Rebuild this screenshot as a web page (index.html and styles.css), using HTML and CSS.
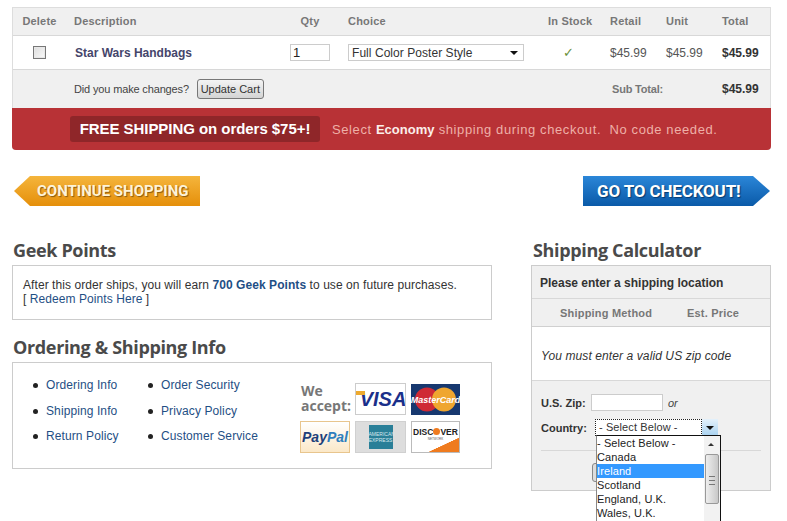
FILE: index.html
```html
<!DOCTYPE html>
<html lang="en">
<head>
  <meta charset="UTF-8">
  <title>Shopping Cart</title>
  <link rel="stylesheet" href="styles.css">
</head>
<body>
  <div class="page">
    <div class="cart">
      <div class="cart-row cart-head">
        <div class="col-delete">Delete</div>
        <div>Description</div>
        <div class="col-qty">Qty</div>
        <div>Choice</div>
        <div>In Stock</div>
        <div>Retail</div>
        <div>Unit</div>
        <div>Total</div>
      </div>
      <div class="cart-row cart-item">
        <div class="col-delete"><span class="checkbox"></span></div>
        <div class="item-name">Star Wars Handbags</div>
        <div class="col-qty"><span class="qty-input">1</span></div>
        <div><span class="choice-select">Full Color Poster Style<span class="select-arrow"></span></span></div>
        <div class="stock-check">✓</div>
        <div>$45.99</div>
        <div>$45.99</div>
        <div class="price-total">$45.99</div>
      </div>
      <div class="cart-row cart-foot">
        <div></div>
        <div class="changes">Did you make changes? <button class="update-btn">Update Cart</button></div>
        <div class="subtotal-label">Sub Total:</div>
        <div class="price-total">$45.99</div>
      </div>
      <div class="promo">
        <span class="promo-badge">FREE SHIPPING on orders $75+!</span>
        <span class="promo-text">Select <b>Economy</b> shipping during checkout.&nbsp; No code needed.</span>
      </div>
    </div>

    <div class="actions">
      <a class="arrow-btn continue">CONTINUE SHOPPING</a>
      <a class="arrow-btn checkout">GO TO CHECKOUT!</a>
    </div>

    <div class="lower">
      <div class="left-col">
        <h2>Geek Points</h2>
        <div class="panel points">
          After this order ships, you will earn <b>700 Geek Points</b> to use on future purchases.<br>
          [ <a>Redeem Points Here</a> ]
        </div>
        <h2 class="second">Ordering &amp; Shipping Info</h2>
        <div class="panel info">
          <ul class="links">
            <li><a>Ordering Info</a></li>
            <li><a>Shipping Info</a></li>
            <li><a>Return Policy</a></li>
          </ul>
          <ul class="links links-two">
            <li><a>Order Security</a></li>
            <li><a>Privacy Policy</a></li>
            <li><a>Customer Service</a></li>
          </ul>
          <div class="cards">
            <div class="we-accept">We accept:</div>
            <div class="card visa"><span class="visa-flag"></span>VISA</div>
            <div class="card mastercard">
              <svg width="49" height="31" viewBox="0 0 49 31">
                <rect width="49" height="31" fill="#17386f"/>
                <circle cx="16" cy="15.500" r="12" fill="#cf2a35"/>
                <circle cx="33" cy="15.500" r="12" fill="#efa62f"/>
                <text x="24.500" y="19" text-anchor="middle" class="mc-text">MasterCard</text>
              </svg>
            </div>
            <div class="card paypal"><b>Pay</b><b class="pal">Pal</b></div>
            <div class="card amex"><span class="amex-box">AMERICAN EXPRESS</span></div>
            <div class="card discover">
              <span class="disc-name">DISC<i></i>VER</span>
              <span class="disc-sub">NETWORK</span>
            </div>
          </div>
        </div>
      </div>

      <div class="right-col">
        <h2>Shipping Calculator</h2>
        <div class="calc">
          <div class="calc-title">Please enter a shipping location</div>
          <div class="calc-cols"><span>Shipping Method</span><span>Est. Price</span></div>
          <div class="calc-msg">You must enter a valid US zip code</div>
          <div class="calc-form">
            <div class="zip-row"><b>U.S. Zip:</b><span class="zip-input"></span><i>or</i></div>
            <div class="country-row"><b>Country:</b>
              <span class="country-select"><span class="country-value">- Select Below -</span><span class="country-btn"></span></span>
            </div>
            <div class="calc-submit"><button class="calc-btn" aria-label="Calculate"></button></div>
          </div>
          <div class="dropdown">
            <ul class="dropdown-list">
              <li>- Select Below -</li>
              <li>Canada</li>
              <li class="selected">Ireland</li>
              <li>Scotland</li>
              <li>England, U.K.</li>
              <li>Wales, U.K.</li>
            </ul>
            <div class="scrollbar">
              <span class="scroll-up"></span>
              <span class="scroll-thumb"></span>
            </div>
          </div>
        </div>
      </div>
    </div>
  </div>
</body>
</html>
```

FILE: styles.css
```css
* {
  margin: 0;
  padding: 0;
  box-sizing: border-box;
}
html, body {
  height: 521px;
  overflow: hidden;
}
body {
  background: #fff;
  color: #333;
  font-family: "Liberation Sans", Arial, sans-serif;
  font-size: 12px;
}
a {
  color: #1f4f85;
}
.page {
  width: 759px;
  margin: 7px 0 0 12px;
}

/* cart table */
.cart {
  border: 1px solid #ddd;
  border-bottom: none;
  border-radius: 0 0 4px 4px;
}
.cart-row {
  display: grid;
  grid-template-columns: 61px 216px 58px 200px 62px 56px 56px 48px;
  align-items: center;
}
.cart-head {
  height: 28px;
  padding-bottom: 2px;
  background: #f0f0f0;
  border-bottom: 1px solid #d8d8d8;
  color: #777;
  font-size: 11px;
  font-weight: bold;
  letter-spacing: 0.2px;
}
.col-delete {
  text-align: center;
  padding-right: 8px;
}
.col-qty {
  text-align: center;
  padding-right: 18px;
}
.cart-item {
  height: 34px;
  background: #fff;
  border-bottom: 1px solid #d8d8d8;
  color: #555;
}
.checkbox {
  display: block;
  width: 13px;
  height: 13px;
  margin: 0 auto;
  border: 1px solid #777;
  background: linear-gradient(135deg, #ddd, #fafafa);
  box-shadow: inset 0 0 0 1px #e8e8e8;
}
.item-name {
  font-weight: bold;
  color: #45456a;
  padding-left: 1px;
}
.qty-input {
  display: block;
  width: 40px;
  height: 17px;
  padding-left: 2px;
  border: 1px solid #ccc;
  background: #fff;
  color: #222;
  font-size: 13px;
  line-height: 15px;
  text-align: left;
}
.choice-select {
  display: flex;
  align-items: center;
  justify-content: space-between;
  width: 176px;
  height: 17px;
  padding: 0 5px 0 3px;
  border: 1px solid #ccc;
  color: #333;
  letter-spacing: 0.05px;
}
.select-arrow {
  width: 0;
  height: 0;
  border-left: 4px solid transparent;
  border-right: 4px solid transparent;
  border-top: 4px solid #111;
}
.stock-check {
  padding-left: 15px;
  color: #6a8f3a;
  font-family: "DejaVu Sans", sans-serif;
  font-size: 13px;
  font-weight: bold;
}
.price-total {
  font-weight: bold;
  color: #333;
}
.cart-foot {
  height: 38px;
  background: #f0f0f0;
  grid-template-columns: 61px 537px 111px 48px;
}
.changes {
  font-size: 11px;
  color: #444;
  letter-spacing: -0.15px;
}
.update-btn {
  width: 67px;
  height: 20px;
  margin-left: 5px;
  border: 1px solid #777;
  border-radius: 3px;
  background: linear-gradient(#f4f4f4, #d4d4d4);
  color: #333;
  font-family: inherit;
  font-size: 11px;
}
.subtotal-label {
  color: #777;
  font-size: 11px;
  font-weight: bold;
  padding-left: 1px;
  letter-spacing: -0.2px;
}
.promo {
  display: flex;
  align-items: center;
  height: 42px;
  margin: 0 0 0 -1px;
  width: 759px;
  padding-left: 58px;
  background: #b83236;
  border-radius: 0 0 4px 4px;
}
.promo-badge {
  width: 250px;
  height: 26px;
  background: #8f2629;
  border-radius: 3px;
  color: #fff;
  font-size: 15px;
  font-weight: bold;
  line-height: 25px;
  text-align: center;
  letter-spacing: -0.05px;
}
.promo-text {
  margin-left: 12px;
  color: #eeb0a8;
  font-size: 13px;
  letter-spacing: 0.6px;
}
.promo-text b {
  color: #fbeeea;
  letter-spacing: 0;
}

/* arrow buttons */
.actions {
  display: flex;
  justify-content: space-between;
  margin-top: 26px;
  padding: 0 1px 0 2px;
}
.arrow-btn {
  display: block;
  width: 186px;
  height: 30px;
  font-family: "Roboto", sans-serif;
  font-weight: bold;
  font-size: 15px;
  line-height: 30px;
  color: #fff;
}
.continue {
  padding-left: 23px;
  background: linear-gradient(#f5b53c, #e58f0a);
  clip-path: polygon(0 50%, 16px 0, 100% 0, 100% 100%, 16px 100%);
  color: #fdf3d8;
  text-shadow: 1px 1px 1px #8a5a10;
}
.checkout {
  width: 187px;
  padding-left: 14px;
  font-size: 17px;
  letter-spacing: -0.15px;
  background: linear-gradient(#2b86d8, #0a5aa8);
  clip-path: polygon(0 0, 170px 0, 100% 50%, 170px 100%, 0 100%);
  text-shadow: 1px 1px 1px #063a70;
}

/* lower columns */
.lower {
  display: flex;
  justify-content: space-between;
  margin-top: 32px;
}
h2 {
  height: 27px;
  padding-left: 1px;
  color: #4a4a4a;
  font-family: "Open Sans", sans-serif;
  font-size: 18px;
  line-height: 24px;
  font-weight: bold;
  letter-spacing: -0.35px;
}
h2.second {
  margin-top: 15px;
}
.left-col {
  width: 480px;
}
.right-col {
  width: 240px;
}
.right-col h2 {
  padding-left: 2px;
}
.panel {
  border: 1px solid #ccc;
  background: #fff;
}
.points {
  height: 55px;
  padding: 12px 10px 0;
  line-height: 14px;
  color: #333;
  letter-spacing: 0.07px;
}
.points b {
  color: #1f4f85;
}
.info {
  display: flex;
  height: 107px;
  padding-top: 10px;
}
.links {
  width: 115px;
  margin-left: 20px;
  list-style: none;
  color: #222;
  line-height: 25.500px;
}
.links li {
  display: flex;
  align-items: center;
}
.links li::before {
  content: "";
  width: 5px;
  height: 5px;
  margin-right: 8px;
  border-radius: 50%;
  background: #222;
}
.links-two {
  width: 140px;
  margin-left: 0;
}
.links a {
  letter-spacing: 0.1px;
}
.cards {
  display: grid;
  grid-template-columns: 50px 51px 49px;
  grid-auto-rows: 32px;
  gap: 6px 5px;
  margin: 10px 0 0 12px;
  width: 160px;
}
.we-accept {
  color: #777;
  font-family: "Open Sans", sans-serif;
  font-size: 14px;
  font-weight: bold;
  line-height: 15px;
  width: 54px;
  padding-left: 1px;
}
.card {
  height: 32px;
  overflow: hidden;
  display: flex;
  align-items: center;
  justify-content: center;
}
.visa {
  position: relative;
  padding-left: 5px;
  border: 1px solid #ccc;
  color: #1a2f8a;
  font-size: 20px;
  font-style: italic;
  font-weight: bold;
}
.visa-flag {
  position: absolute;
  left: 0;
  top: 7px;
  width: 9px;
  height: 4px;
  background: #eda92e;
}
.mastercard svg {
  display: block;
}
.mc-text {
  fill: #fff;
  font-size: 9px;
  font-weight: bold;
  font-style: italic;
  font-family: "Liberation Sans", sans-serif;
}
.paypal {
  border: 1px solid #e8c58d;
  background: linear-gradient(#fff, #fbe8c8);
  font-size: 14px;
  font-style: italic;
  color: #1d3f7a;
}
.paypal .pal {
  color: #2f7fbe;
}
.amex {
  background: #ddd;
  border: 1px solid #d0d0d0;
}
.amex-box {
  width: 24px;
  height: 24px;
  background: #2a7f98;
  color: #d8e8ee;
  font-size: 5px;
  line-height: 6px;
  text-align: center;
  padding-top: 6px;
}
.discover {
  flex-direction: column;
  border: 1px solid #bbb;
  background: linear-gradient(155deg, #fff 72%, #ef7b1f 73%);
  color: #222;
}
.disc-name {
  font-size: 8.500px;
  font-weight: bold;
  display: flex;
  align-items: center;
  margin-top: -7px;
}
.disc-name i {
  width: 7px;
  height: 7px;
  border-radius: 50%;
  background: #ef7b1f;
}
.disc-sub {
  font-size: 3px;
  color: #555;
}

/* shipping calculator */
.calc {
  position: relative;
  height: 226px;
  border: 1px solid #ccc;
  background: #f0f0f0;
}
.calc-title {
  height: 33px;
  padding-left: 8px;
  border-bottom: 1px solid #d8d8d8;
  color: #333;
  font-weight: bold;
  line-height: 34px;
}
.calc-cols {
  display: flex;
  height: 28px;
  padding-left: 28px;
  border-bottom: 1px solid #d0d0d0;
  color: #777;
  font-size: 11px;
  font-weight: bold;
  line-height: 28px;
  letter-spacing: 0.2px;
}
.calc-cols span:first-child {
  width: 127px;
}
.calc-msg {
  height: 54px;
  padding-left: 9px;
  border-bottom: 1px solid #d8d8d8;
  background: #fff;
  color: #333;
  font-style: italic;
  line-height: 58px;
  letter-spacing: 0.1px;
}
.calc-form {
  padding: 13px 9px 0;
  font-size: 11px;
  color: #333;
}
.zip-row, .country-row {
  display: flex;
  align-items: center;
  height: 17px;
}
.zip-row b, .country-row b {
  width: 50px;
}
.zip-input {
  width: 72px;
  height: 17px;
  border: 1px solid #ccc;
  background: #fff;
  margin-right: 5px;
}
.zip-row i {
  color: #444;
}
.country-row {
  margin-top: 8px;
}
.country-row b {
  width: 54px;
}
.country-select {
  display: flex;
  width: 123px;
  height: 17px;
}
.country-value {
  width: 107px;
  padding-left: 3px;
  border: 1px dotted #222;
  background: #fff;
  line-height: 14px;
  font-size: 11px;
  letter-spacing: 0.1px;
}
.country-btn {
  position: relative;
  width: 16px;
  background: linear-gradient(#e4f1fb, #a8d2f0);
}
.country-btn::after {
  content: "";
  position: absolute;
  left: 4px;
  top: 7px;
  border-left: 4px solid transparent;
  border-right: 4px solid transparent;
  border-top: 4px solid #111;
}
.calc-submit {
  margin-top: 14px;
  padding-top: 12px;
  border-top: 1px solid #d8d8d8;
  text-align: center;
}
.calc-btn {
  display: block;
  width: 116px;
  height: 19px;
  margin-left: 51px;
  border: 1px solid #888;
  border-radius: 3px;
  background: #ddd;
}
.dropdown {
  position: absolute;
  left: 64px;
  top: 169px;
  display: flex;
  width: 125px;
  height: 90px;
  background: #fff;
  border: 1px solid #111;
  border-left-color: #888;
  font-size: 11px;
  letter-spacing: 0.1px;
  color: #222;
}
.dropdown-list {
  width: 107px;
  list-style: none;
  line-height: 14px;
}
.dropdown-list li {
  height: 14px;
}
.dropdown-list .selected {
  background: #3399ff;
  color: #fff;
}
.scrollbar {
  position: relative;
  flex: 1;
  background: #f2f2f2;
}
.scroll-up {
  position: absolute;
  left: 4px;
  top: 7px;
  border-left: 3px solid transparent;
  border-right: 3px solid transparent;
  border-bottom: 3px solid #333;
}
.scroll-thumb {
  position: absolute;
  left: 1px;
  top: 18px;
  width: 14px;
  height: 50px;
  border: 1px solid #999;
  border-radius: 2px;
  background: linear-gradient(90deg, #eee, #c8c8c8);
}
.scroll-thumb::after {
  content: "";
  position: absolute;
  left: 3px;
  top: 21px;
  width: 6px;
  height: 7px;
  border-top: 1px solid #777;
  border-bottom: 1px solid #777;
  background: linear-gradient(#777, #777) center / 100% 1px no-repeat;
}
```
